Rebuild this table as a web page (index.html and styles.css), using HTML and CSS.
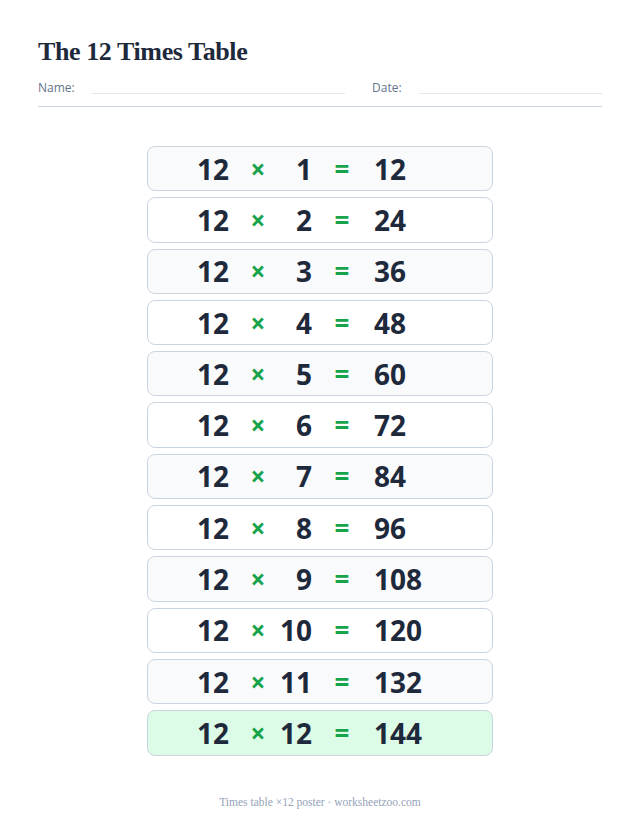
FILE: index.html
```html
<!DOCTYPE html>
<html lang="en">
<head>
<meta charset="utf-8">
<title>The 12 Times Table</title>
<link rel="stylesheet" href="styles.css">
</head>
<body>
<div class="page">
  <header class="head">
    <h1 class="title">The 12 Times Table</h1>
    <div class="fields">
      <div class="field field-name"><span class="label">Name:</span><span class="blank"></span></div>
      <div class="field field-date"><span class="label">Date:</span><span class="blank"></span></div>
    </div>
  </header>
  <main class="table">
    <div class="row odd"><span class="a">12</span><span class="op">×</span><span class="b">1</span><span class="eq">=</span><span class="r">12</span></div>
    <div class="row"><span class="a">12</span><span class="op">×</span><span class="b">2</span><span class="eq">=</span><span class="r">24</span></div>
    <div class="row odd"><span class="a">12</span><span class="op">×</span><span class="b">3</span><span class="eq">=</span><span class="r">36</span></div>
    <div class="row"><span class="a">12</span><span class="op">×</span><span class="b">4</span><span class="eq">=</span><span class="r">48</span></div>
    <div class="row odd"><span class="a">12</span><span class="op">×</span><span class="b">5</span><span class="eq">=</span><span class="r">60</span></div>
    <div class="row"><span class="a">12</span><span class="op">×</span><span class="b">6</span><span class="eq">=</span><span class="r">72</span></div>
    <div class="row odd"><span class="a">12</span><span class="op">×</span><span class="b">7</span><span class="eq">=</span><span class="r">84</span></div>
    <div class="row"><span class="a">12</span><span class="op">×</span><span class="b">8</span><span class="eq">=</span><span class="r">96</span></div>
    <div class="row odd"><span class="a">12</span><span class="op">×</span><span class="b">9</span><span class="eq">=</span><span class="r">108</span></div>
    <div class="row"><span class="a">12</span><span class="op">×</span><span class="b">10</span><span class="eq">=</span><span class="r">120</span></div>
    <div class="row odd"><span class="a">12</span><span class="op">×</span><span class="b">11</span><span class="eq">=</span><span class="r">132</span></div>
    <div class="row last"><span class="a">12</span><span class="op">×</span><span class="b">12</span><span class="eq">=</span><span class="r">144</span></div>
  </main>
  <footer class="foot">Times table ×12 poster · worksheetzoo.com</footer>
</div>
</body>
</html>
```
FILE: styles.css
```css
* { box-sizing: border-box; }
html, body { margin: 0; padding: 0; background: #ffffff; }
.page {
  width: 640px;
  height: 829px;
  padding: 36px 38px 0 38px;
  display: flex;
  flex-direction: column;
}
.head {
  border-bottom: 1px solid #cbd5e1;
  padding-bottom: 10px;
}
.title {
  margin: 0;
  font-family: "Liberation Serif", "Times New Roman", serif;
  font-weight: 700;
  font-size: 26px;
  letter-spacing: -0.4px;
  line-height: 32px;
  color: #1e293b;
}
.fields {
  margin-top: 12px;
  display: flex;
  gap: 27px;
  align-items: flex-end;
}
.field {
  display: flex;
  align-items: flex-end;
  gap: 17px;
}
.field-name { flex: 307 1 0; }
.field-date { flex: 230 1 0; }
.label {
  font-family: "Open Sans", "Noto Sans", sans-serif;
  font-size: 12px;
  line-height: 16px;
  color: #64748b;
}
.blank {
  flex: 1;
  border-bottom: 1px solid #e2e8f0;
  margin-bottom: 2px;
}
.table {
  margin-top: 39px;
  display: flex;
  flex-direction: column;
  align-items: center;
  gap: 6px;
}
.row {
  width: 346px;
  height: 45.3px;
  border: 1px solid #cbd5e1;
  border-radius: 8px;
  background: #ffffff;
  display: flex;
  align-items: center;
  padding-left: 33px;
  font-family: "Open Sans", "Noto Sans", sans-serif;
  font-weight: 700;
  font-size: 28px;
  color: #1e293b;
  line-height: 1;
}
.row.odd { background: #f8fafc; }
.row.last { background: #dcfce7; }
.a { width: 48px; text-align: right; }
.op { width: 22px; margin-left: 18px; text-align: center; color: #16a34a; font-size: 26px; }
.b { width: 33px; margin-left: 10px; text-align: right; }
.eq { width: 20px; margin-left: 20px; text-align: center; color: #16a34a; font-size: 26px; }
.r { margin-left: 22px; }
.foot {
  margin-top: 40px;
  text-align: center;
  font-family: "Liberation Serif", "Times New Roman", serif;
  font-size: 11.5px;
  color: #94a3b8;
}
```
